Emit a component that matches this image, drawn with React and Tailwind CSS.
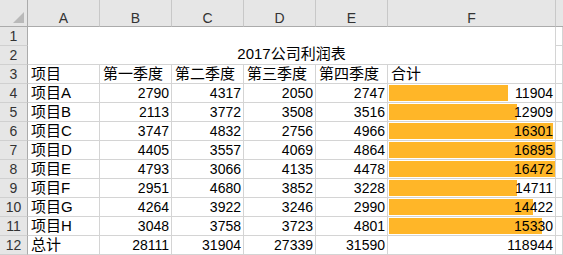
import React from "react";

const rows = [
  ["项目A", 2790, 4317, 2050, 2747, 11904, 119],
  ["项目B", 2113, 3772, 3508, 3516, 12909, 128],
  ["项目C", 3747, 4832, 2756, 4966, 16301, 164],
  ["项目D", 4405, 3557, 4069, 4864, 16895, 167],
  ["项目E", 4793, 3066, 4135, 4478, 16472, 167],
  ["项目F", 2951, 4680, 3852, 3228, 14711, 128],
  ["项目G", 4264, 3922, 3246, 2990, 14422, 144],
  ["项目H", 3048, 3758, 3723, 4801, 15330, 153],
];

const cjk = "font-['Liberation_Sans','Noto_Sans_CJK_SC',sans-serif] text-[15px]";
const num = "font-['Liberation_Sans','Noto_Sans_CJK_SC',sans-serif] text-[14px]";
const cell = "h-[19px] border-r border-b border-[#d4d4d4] leading-[18px] text-black whitespace-nowrap overflow-hidden";

function ColHead({ children, last }) {
  return (
    <div className={`h-[27px] bg-[#e6e6e6] border-b border-[#ababab] ${last ? "" : "border-r border-r-[#c8c8c8]"} flex justify-center pt-[10px] leading-[17px] text-[14px] text-[#333] font-['Liberation_Sans',sans-serif]`}>
      {children}
    </div>
  );
}

function RowHead({ n }) {
  return (
    <div className="h-[19px] bg-[#e6e6e6] border-r border-[#ababab] border-b border-b-[#d0d0d0] flex justify-center leading-[18px] text-[14px] text-[#333] font-['Liberation_Sans',sans-serif]">
      {n}
    </div>
  );
}

function TextCell({ children }) {
  return <div className={`${cell} ${cjk} pl-[3px]`}>{children}</div>;
}

function NumCell({ children }) {
  return <div className={`${cell} ${num} text-right pr-[2px]`}>{children}</div>;
}

function Blank() {
  return <div className={cell}></div>;
}

export default function App() {
  return (
    <div className="w-[563px] h-[255px] overflow-hidden bg-white">
      <div className="grid grid-cols-[28px_72px_72px_72px_72px_72px_168px_7px] grid-rows-[27px_repeat(12,19px)]">
        {/* header */}
        <div className="h-[27px] bg-[#e6e6e6] border-b border-r border-[#ababab] relative">
          <svg className="absolute left-[13px] top-[12px]" width="11" height="11" viewBox="0 0 11 11">
            <polygon points="11,0 11,11 0,11" fill="#b9b9b9" />
          </svg>
        </div>
        <ColHead>A</ColHead>
        <ColHead>B</ColHead>
        <ColHead>C</ColHead>
        <ColHead>D</ColHead>
        <ColHead>E</ColHead>
        <ColHead>F</ColHead>
        <ColHead last></ColHead>

        {/* rows 1-2: merged title A1:F2 */}
        <RowHead n={1} />
        <div className={`col-span-6 row-span-2 border-r border-b border-[#d4d4d4] flex items-end justify-center leading-[20px] text-black whitespace-nowrap ${cjk}`}>
          2017公司利润表
        </div>
        <Blank />
        <RowHead n={2} />
        <Blank />

        {/* row 3 */}
        <RowHead n={3} />
        <TextCell>项目</TextCell>
        <TextCell>第一季度</TextCell>
        <TextCell>第二季度</TextCell>
        <TextCell>第三季度</TextCell>
        <TextCell>第四季度</TextCell>
        <TextCell>合计</TextCell>
        <Blank />

        {rows.map((r, i) => (
          <React.Fragment key={i}>
            <RowHead n={i + 4} />
            <TextCell>{r[0]}</TextCell>
            <NumCell>{r[1]}</NumCell>
            <NumCell>{r[2]}</NumCell>
            <NumCell>{r[3]}</NumCell>
            <NumCell>{r[4]}</NumCell>
            <div className={`${cell} ${num} text-right pr-[2px] relative`}>
              <div className="absolute left-[1px] top-[1px] h-[16px] bg-[#ffb628]" style={{ width: r[6] }}></div>
              <span className="relative">{r[5]}</span>
            </div>
            <Blank />
          </React.Fragment>
        ))}

        {/* row 12 */}
        <RowHead n={12} />
        <TextCell>总计</TextCell>
        <NumCell>28111</NumCell>
        <NumCell>31904</NumCell>
        <NumCell>27339</NumCell>
        <NumCell>31590</NumCell>
        <NumCell>118944</NumCell>
        <Blank />
      </div>
    </div>
  );
}
